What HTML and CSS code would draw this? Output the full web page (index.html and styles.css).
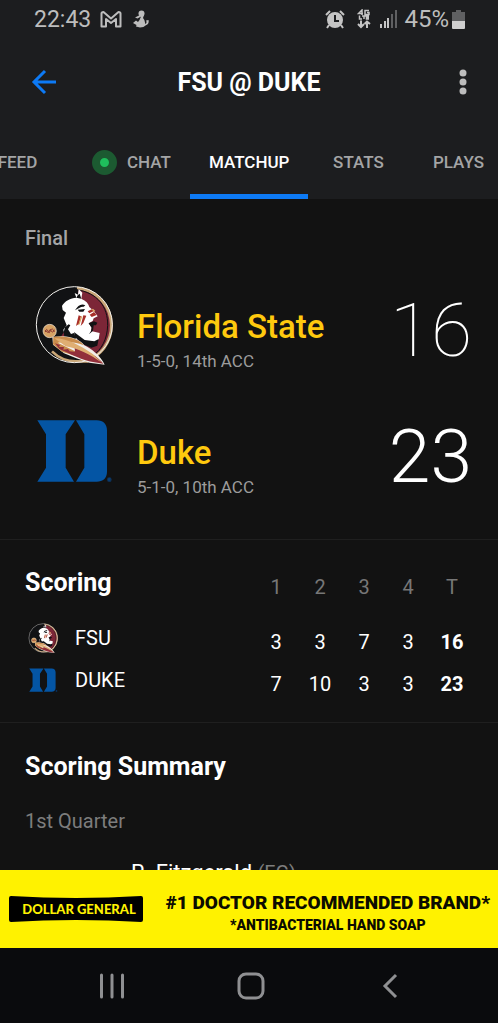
FILE: index.html
```
<!DOCTYPE html>
<html lang="en">
<head>
    <meta charset="UTF-8">
    <meta name="viewport" content="width=device-width, initial-scale=1.0">
    <title>FSU @ DUKE</title>
    <link rel="stylesheet" href="styles.css">
</head>
<body>
    <!-- Team logos, shared by the score rows and the scoring table -->
    <svg class="sprite" aria-hidden="true">
        <symbol id="logo-fsu" viewBox="42 30 246 246">
            <circle cx="163" cy="149" r="114" fill="#111214"/>
            <path d="M174 37A113 113 0 0 1 210 253L180 235L120 190L176 100Z" fill="#7c2637"/>
            <path d="M174 37A113 113 0 0 1 214 251" fill="none" stroke="#c9a778" stroke-width="9" transform="translate(-3 2)"/>
            <path d="M174 43C238 52 269 95 268 150C267 190 250 224 222 242" fill="none" stroke="#111214" stroke-width="3" transform="translate(-5 1)"/>
            <path d="M96 229C116 249 140 259 168 259L205 259" fill="none" stroke="#c9a778" stroke-width="8"/>
            <circle cx="163" cy="149" r="114" fill="none" stroke="#f2f0ed" stroke-width="3"/>
            <path d="M126 93C134 78 151 69 169 68L164 54L174 59L176 42L187 53L184 71C198 77 205 85 208 96L222 109L233 124L221 130L218 138L206 145L215 158L213 168L239 174L236 193L222 212L198 208L178 193L163 196L150 184L135 184L130 164L140 151L131 129L138 113L128 105Z" fill="#fff"/>
            <path d="M169 68L184 71L179 56L173 61ZM165 106C174 91 184 84 196 91L191 95C182 94 176 100 165 106ZM173 104L195 102L190 110L178 110ZM135 157L146 148L151 151L144 163L153 177L162 174L168 190L158 199L133 187L131 172ZM206 145L222 139L232 143L228 151L221 151L219 167L207 178L213 168L215 158ZM162 171L194 195L223 199L236 192L232 212L214 218L187 207L167 188Z" fill="#111214"/>
            <path d="M176 121L183 124L177 146L168 153ZM190 121L199 122L190 144L182 153ZM203 109L215 103L222 108L208 115ZM209 119L222 111L230 120L215 126Z" fill="#a92f29"/>
            <path d="M183 124L187 124L179 148L174 151ZM215 103L219 101L226 107L222 111Z" fill="#d8a562"/>
            <path d="M97 186L126 184C151 183 180 194 193 211C215 222 241 242 254 269L208 263L169 250L132 235L99 209Z" fill="#f2eee8"/>
            <path d="M100 185C132 182 176 188 192 211C168 202 139 199 113 203L184 238L165 242L126 230L99 208Z" fill="#c98c4c"/>
            <path d="M105 205L120 210L117 216L132 216L130 224L144 222L149 229L165 230L164 218C204 225 236 247 250 266C215 263 180 253 140 232L118 222Z" fill="#922f3b"/>
            <path d="M103 190C142 190 179 211 218 237L247 264C211 239 174 220 137 214Z" fill="#dfae72"/>
            <circle cx="89" cy="168" r="20" fill="#d6a264" stroke="#f2e9dd" stroke-width="2"/>
            <path d="M76 171Q79 156 85 170Q88 178 91 166Q98 156 103 171M76 165Q84 180 91 163Q97 179 103 164" fill="none" stroke="#8d3933" stroke-width="3"/>
        </symbol>
        <symbol id="logo-duke" viewBox="42 20 246 246">
            <path d="M52 48H165L137 90V190L162 232H52L78 190V90ZM168 48H230C250 48 261 60 261 78V202C261 221 249 232 230 232H168L193 190V90Z" fill="#0455a4"/>
            <circle cx="268" cy="226" r="7" fill="#0d3158"/>
            <path d="M266 230V222H270V226H266L271 230" fill="none" stroke="#0455a4" stroke-width="1"/>
        </symbol>
    </svg>

    <div class="app">
        <header class="header">
            <div class="status-bar">
                <div class="status-group">
                    <span class="clock">22:43</span>
                    <svg class="icon-mail" width="22" height="17" viewBox="0 0 22 17" fill="none" stroke="#bdbdbd" stroke-width="2" stroke-linejoin="round">
                        <path d="M1.5 2.5Q1.5 1 3.5 1L11 7.5L18.5 1Q20.5 1 20.5 2.5V15.500H16V8L11 12L6 8V15.500H1.500Z"/>
                    </svg>
                    <svg class="icon-pet" width="16" height="18" viewBox="0 0 16 18" fill="#bdbdbd">
                        <circle cx="8.500" cy="3.500" r="3"/>
                        <path d="M7 5H11L10 8Q12.500 10.500 12 14Q14.500 13 13 10.500L15.500 10Q16.500 14 12.500 15.500Q11 17.500 7 17.500L3 16.500L3.500 15L0 13L3 10.500L5 12L6.500 10L8 6.500L4.500 8.500L2 7.500L5 6Z"/>
                    </svg>
                </div>
                <div class="status-group">
                    <svg class="icon-alarm" width="20" height="19" viewBox="0 0 20 19">
                        <circle cx="10" cy="10" r="8" fill="#c4c4c4"/>
                        <path d="M1 5L5 1M19 5L15 1M4 15L2 18M16 15L18 18" stroke="#c4c4c4" stroke-width="2"/>
                        <path d="M10 5V11H14" fill="none" stroke="#1c1d1f" stroke-width="2"/>
                    </svg>
                    <svg class="icon-lte" width="14" height="20" viewBox="0 0 14 20" fill="none" stroke="#c4c4c4" stroke-width="1.500">
                        <path d="M5 6V1L1.500 4.500H6M12 1.500H8V5.500H12V3.500H10M2.500 6.500V10H5M5 7H9M7 7V10M12 7H9.500V10H12M9.500 8.500H12"/>
                        <path d="M4 11.500V18M1 15L4 18L7 15M10 19V12.500M7.500 15L10 12.500L13 15" stroke-width="2"/>
                    </svg>
                    <svg class="icon-signal" width="17" height="18" viewBox="0 0 17 18" fill="#c4c4c4">
                        <path d="M0 14H2V18H0ZM4 11H6V18H4ZM7 8H9V18H7Z"/>
                        <path d="M11 4H13V18H11ZM15 0H17V18H15Z" fill="#5f6062"/>
                    </svg>
                    <span>45%</span>
                    <svg class="icon-battery" width="13" height="19" viewBox="0 0 13 19">
                        <path d="M4 0H9V2H13V11H0V2H4Z" fill="#5f6062"/>
                        <path d="M0 11H13V18Q13 19 12 19H1Q0 19 0 18Z" fill="#cfcfcf"/>
                    </svg>
                </div>
            </div>

            <div class="app-bar">
                <button class="icon-button" type="button" aria-label="Back">
                    <svg width="26" height="26" viewBox="0 0 26 26" fill="none" stroke="#0d7af5" stroke-width="3">
                        <path d="M25 13H3M14 2L3 13L14 24"/>
                    </svg>
                </button>
                <h1>FSU @ DUKE</h1>
                <button class="icon-button" type="button" aria-label="More options">
                    <svg width="8" height="26" viewBox="0 0 8 26" fill="#bdbdbd">
                        <circle cx="4" cy="4" r="3.500"/>
                        <circle cx="4" cy="13" r="3.500"/>
                        <circle cx="4" cy="22" r="3.500"/>
                    </svg>
                </button>
            </div>

            <nav class="tabs">
                <a href="#feed">FEED</a>
                <a href="#chat"><span class="live-dot"></span>CHAT</a>
                <a href="#matchup" class="active">MATCHUP</a>
                <a href="#stats">STATS</a>
                <a href="#plays">PLAYS</a>
            </nav>
        </header>

        <main class="content">
            <section class="game">
                <p class="game-status">Final</p>
                <div class="team">
                    <svg class="team-logo" role="img" aria-label="Florida State"><use href="#logo-fsu"/></svg>
                    <div class="team-info">
                        <h2>Florida State</h2>
                        <p>1-5-0, 14th ACC</p>
                    </div>
                    <span class="score">16</span>
                </div>
                <div class="team">
                    <svg class="team-logo" role="img" aria-label="Duke"><use href="#logo-duke"/></svg>
                    <div class="team-info">
                        <h2>Duke</h2>
                        <p>5-1-0, 10th ACC</p>
                    </div>
                    <span class="score winner">23</span>
                </div>
            </section>

            <section class="scoring">
                <table>
                    <thead>
                        <tr>
                            <th class="section-title" scope="col">Scoring</th>
                            <th class="period" scope="col">1</th>
                            <th class="period" scope="col">2</th>
                            <th class="period" scope="col">3</th>
                            <th class="period" scope="col">4</th>
                            <th class="period" scope="col">T</th>
                        </tr>
                    </thead>
                    <tbody>
                        <tr>
                            <th scope="row"><div class="row-team"><svg><use href="#logo-fsu"/></svg>FSU</div></th>
                            <td>3</td>
                            <td>3</td>
                            <td>7</td>
                            <td>3</td>
                            <td class="total">16</td>
                        </tr>
                        <tr>
                            <th scope="row"><div class="row-team"><svg><use href="#logo-duke"/></svg>DUKE</div></th>
                            <td>7</td>
                            <td>10</td>
                            <td>3</td>
                            <td>3</td>
                            <td class="total">23</td>
                        </tr>
                    </tbody>
                </table>
            </section>

            <section class="summary">
                <h2 class="section-title">Scoring Summary</h2>
                <h3>1st Quarter</h3>
                <p class="play">R. Fitzgerald <span>(FG)</span></p>
            </section>
        </main>

        <a class="ad" href="#ad">
            <span class="ad-logo">
                <svg viewBox="0 0 134 26" preserveAspectRatio="none" aria-hidden="true">
                    <path d="M2 0Q67 4 132 0Q134 0 134 2V24Q134 26 132 26Q67 22 2 26Q0 26 0 24V2Q0 0 2 0Z"/>
                </svg>
                <span>DOLLAR GENERAL</span>
            </span>
            <span class="ad-copy">
                <strong>#1 DOCTOR RECOMMENDED BRAND*</strong>
                <small>*ANTIBACTERIAL HAND SOAP</small>
            </span>
        </a>

        <div class="nav-bar">
            <button type="button" aria-label="Recent apps">
                <svg width="26" height="26" viewBox="0 0 26 26" stroke="#8f9092" stroke-width="3" stroke-linecap="round">
                    <path d="M2.500 2V24M13 2V24M23.500 2V24"/>
                </svg>
            </button>
            <button type="button" aria-label="Home">
                <svg width="28" height="28" viewBox="0 0 28 28" fill="none" stroke="#8f9092" stroke-width="3">
                    <rect x="2" y="2" width="24" height="24" rx="7"/>
                </svg>
            </button>
            <button type="button" aria-label="Back">
                <svg width="16" height="26" viewBox="0 0 16 26" fill="none" stroke="#8f9092" stroke-width="3">
                    <path d="M14 2L3 13L14 24"/>
                </svg>
            </button>
        </div>
    </div>
</body>
</html>
```

FILE: styles.css
```
* {
    box-sizing: border-box;
}
body {
    font-family: Roboto, "Liberation Sans", sans-serif;
    background-color: #121212;
    color: #fff;
    margin: 0;
}
h1, h2, h3, p {
    margin: 0;
}
a {
    text-decoration: none;
}
button {
    display: flex;
    align-items: center;
    justify-content: center;
    padding: 0;
    background: none;
    border: none;
    cursor: pointer;
}
.sprite {
    display: none;
}
.app {
    display: flex;
    flex-direction: column;
    height: 100vh;
    overflow: hidden;
}

/* Header */
.header {
    flex: none;
    background-color: #1c1d1f;
}
.status-bar {
    display: flex;
    align-items: center;
    justify-content: space-between;
    height: 38px;
    padding: 0 33px 0 34px;
    font-size: 24px;
    color: #bdbdbd;
}
.status-group {
    display: flex;
    align-items: center;
}
.clock {
    font-size: 23px;
}
.icon-mail {
    margin-left: 9px;
}
.icon-pet {
    margin-left: 11px;
}
.icon-lte {
    margin-left: 12px;
}
.icon-signal {
    margin: 0 7px 0 9px;
}
.icon-battery {
    margin-left: 3px;
}
.app-bar {
    display: flex;
    align-items: center;
    justify-content: space-between;
    height: 88px;
    padding: 0 20px;
}
.app-bar h1 {
    font-size: 25px;
    font-weight: 700;
}
.icon-button {
    width: 48px;
    height: 48px;
}
.app-bar .icon-button:last-child {
    width: 30px;
    margin-left: 18px;
}
.tabs {
    display: flex;
    height: 73px;
    margin-left: -38px;
    overflow: hidden;
}
.tabs a {
    display: flex;
    flex: none;
    align-items: center;
    justify-content: center;
    min-width: 100px;
    padding: 4px 19px 0;
    border-bottom: 5px solid transparent;
    font-size: 17px;
    font-weight: 500;
    color: #a4a5a6;
}
.tabs a:first-child {
    min-width: 111px;
}
.tabs .active {
    color: #fff;
    border-color: #0d7af5;
}
.live-dot {
    width: 25px;
    height: 25px;
    margin-right: 10px;
    border: 8px solid #1c5a31;
    border-radius: 50%;
    background-color: #1fbf5c;
}

/* Scoreboard */
.content {
    flex: 1;
    min-height: 0;
    overflow: hidden;
}
.game {
    padding: 27px 26px 24px 34px;
}
.game-status {
    margin: 0 0 13px -9px;
    font-size: 20px;
    font-weight: 500;
    line-height: 24px;
    color: #a4a5a6;
}
.team {
    display: flex;
    align-items: flex-start;
    height: 126px;
    padding-top: 22px;
}
.team-logo {
    flex: none;
    width: 82px;
    height: 82px;
}
.team-info {
    flex: 1;
    padding: 22px 0 0 21px;
}
.team-info h2 {
    font-size: 33px;
    font-weight: 500;
    line-height: 40px;
    color: #ffc90e;
}
.team-info p {
    font-size: 17px;
    line-height: 28px;
    color: #9c9c9c;
}
.score {
    font-size: 75px;
    font-weight: 100;
    line-height: 90px;
}
.winner {
    font-weight: 300;
}

/* Scoring table */
.section-title {
    font-size: 25px;
    font-weight: 700;
    line-height: 30px;
    text-align: left;
}
.scoring {
    padding: 9px 24px 21px 25px;
    border-top: 1px solid #1f1f1f;
}
.scoring table {
    width: 100%;
    table-layout: fixed;
    border-collapse: collapse;
}
.scoring th {
    padding: 0;
}
.scoring thead tr {
    height: 68px;
}
.scoring tbody tr {
    height: 42px;
    font-size: 20px;
}
.scoring td, .scoring .period {
    width: 44px;
    padding: 8px 0 0;
    font-size: 20px;
    text-align: center;
}
.scoring .period {
    font-weight: 400;
    color: #777;
}
.scoring .total {
    font-weight: 700;
}
.row-team {
    display: flex;
    align-items: center;
    gap: 16px;
    padding-left: 3px;
    font-weight: 400;
}
.row-team svg {
    width: 31px;
    height: 31px;
}

/* Scoring summary */
.summary {
    padding: 29px 25px;
    border-top: 1px solid #1f1f1f;
}
.summary h3 {
    margin-top: 27px;
    font-size: 20px;
    font-weight: 400;
    line-height: 24px;
    color: #7d7d7d;
}
.play {
    padding: 28px 0 0 106px;
    font-size: 22px;
    line-height: 24px;
}
.play span {
    font-size: 20px;
    color: #7d7d7d;
}

/* Ad banner */
.ad {
    display: flex;
    flex: none;
    align-items: center;
    justify-content: space-between;
    height: 78px;
    padding: 0 8px 0 9px;
    background-color: #fff200;
    color: #0c0c00;
}
.ad-logo {
    display: grid;
    flex: none;
    width: 134px;
    height: 26px;
    place-items: center;
}
.ad-logo > * {
    grid-area: 1 / 1;
}
.ad-logo svg {
    width: 134px;
    height: 26px;
}
.ad-logo span {
    padding-left: 6px;
    font-family: Lato, sans-serif;
    font-size: 13px;
    font-weight: 900;
    color: #fff200;
    white-space: nowrap;
}
.ad-copy {
    display: flex;
    flex-direction: column;
    align-items: center;
    padding-top: 8px;
    font-weight: 900;
    white-space: nowrap;
}
.ad-copy strong {
    font-size: 19px;
    font-weight: 900;
    line-height: 24px;
}
.ad-copy small {
    font-size: 14px;
    line-height: 20px;
}

/* System navigation */
.nav-bar {
    display: grid;
    flex: none;
    grid-template-columns: repeat(3, 1fr);
    height: 75px;
    padding: 0 38px 0 42px;
    background-color: #0a0b0d;
}
```
